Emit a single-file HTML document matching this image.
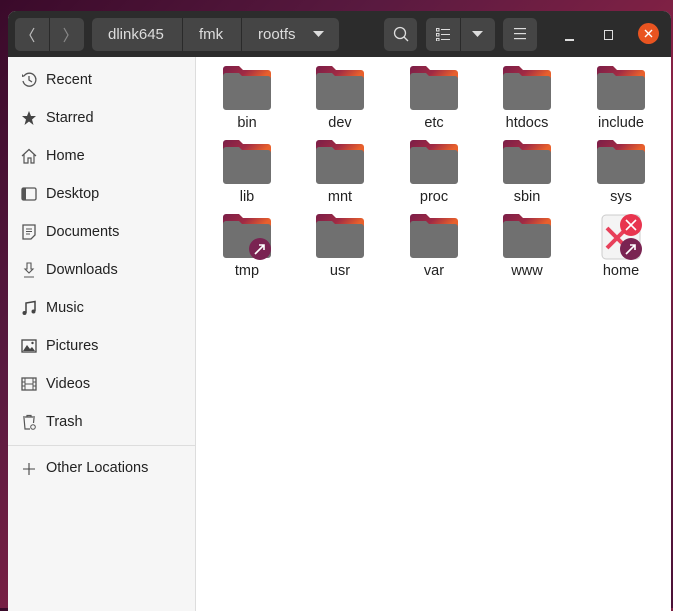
<!DOCTYPE html>
<html><head><style>
*{margin:0;padding:0;box-sizing:border-box}
body{width:673px;height:608px;overflow:hidden;background:linear-gradient(135deg,#3a0a2a 0%,#5a1a40 30%,#8a2346 60%,#4a1238 100%);font-family:"Liberation Sans","DejaVu Sans",sans-serif;position:relative}
.win{position:absolute;left:8px;top:11px;width:663px;height:600px;background:#fff;border-radius:8px 8px 0 0;overflow:hidden}
.hb{position:absolute;left:0;top:0;width:663px;height:46px;background:#2c2c2c}
.btn{position:absolute;top:7px;height:33px;background:#454545;border-radius:5px;color:#ddd;font-size:15px}
.btn span{position:absolute;top:8px}
.sep{position:absolute;top:0;width:1px;height:33px;background:#2a2a2a}
.side{position:absolute;left:0;top:46px;width:188px;height:560px;background:#f6f6f6;border-right:1px solid #ddd}
.it{position:absolute;left:38px;font-size:14.5px;color:#222}
.ic{position:absolute;left:13px;width:16px;height:16px}
.f{position:absolute;width:94px;text-align:center;font-size:14.5px;color:#222}
.f svg{display:block;margin:0 auto 3px}
</style></head><body>
<div class="win">
<div class="hb">
 <div class="btn" style="left:7px;width:69px"><div class="sep" style="left:34px"></div>
  <svg style="position:absolute;left:12px;top:9px" width="10" height="16"><path d="M7 1 L3 8 L7 15" stroke="#bbb" fill="none" stroke-width="1.2"/></svg>
  <svg style="position:absolute;left:46px;top:9px" width="10" height="16"><path d="M3 1 L7 8 L3 15" stroke="#888" fill="none" stroke-width="1.2"/></svg></div>
 <div class="btn" style="left:84px;width:247px"><div class="sep" style="left:90px"></div><div class="sep" style="left:149px"></div>
  <span style="left:16px">dlink645</span><span style="left:107px">fmk</span><span style="left:166px">rootfs</span>
  <svg style="position:absolute;left:221px;top:13px" width="12" height="8"><path d="M0 0H11L5.5 6Z" fill="#ddd"/></svg></div>
 <div class="btn" style="left:376px;width:33px"><svg style="position:absolute;left:9px;top:8px" width="16" height="17"><circle cx="7" cy="7" r="5.5" stroke="#ddd" fill="none" stroke-width="1.3"/><path d="M11 11L15 15" stroke="#ddd" stroke-width="1.3"/></svg></div>
 <div class="btn" style="left:418px;width:69px"><div class="sep" style="left:34px"></div>
  <svg style="position:absolute;left:10px;top:10px" width="14" height="13" fill="#ddd"><rect x="0.5" y="0.5" width="2.5" height="2.5" fill="none" stroke="#ddd"/><rect x="0.5" y="5.5" width="2.5" height="2.5" fill="none" stroke="#ddd"/><rect x="0.5" y="10.5" width="2.5" height="2.5" fill="none" stroke="#ddd"/><rect x="5" y="1" width="9" height="1"/><rect x="5" y="6" width="9" height="1"/><rect x="5" y="11" width="9" height="1"/></svg>
  <svg style="position:absolute;left:46px;top:13px" width="12" height="8"><path d="M0 0H11L5.5 6Z" fill="#ddd"/></svg></div>
 <div class="btn" style="left:495px;width:34px"><svg style="position:absolute;left:11px;top:10px" width="13" height="12" fill="#ddd"><rect y="0" width="12" height="1.2"/><rect y="5" width="12" height="1.2"/><rect y="10" width="12" height="1.2"/></svg></div>
 <div style="position:absolute;left:557px;top:28px;width:9px;height:1.5px;background:#ddd"></div>
 <div style="position:absolute;left:596px;top:19px;width:9px;height:10px;border:1.4px solid #ddd"></div>
 <div style="position:absolute;left:630px;top:12px;width:21px;height:21px;border-radius:50%;background:#e95420"><svg width="21" height="21"><path d="M7 7L14 14M14 7L7 14" stroke="#fff" stroke-width="1.4"/></svg></div>
</div>
<div class="side">
 <svg class="ic" style="top:15px" viewBox="0 0 16 16"><path d="M3 4A6.5 6.5 0 1 1 2 9" fill="none" stroke="#555" stroke-width="1.3"/><path d="M1 2L3.5 4.5L1 5" fill="#555"/><path d="M8 4V8L11 10" fill="none" stroke="#555" stroke-width="1.3"/></svg><div class="it" style="top:15px">Recent</div>
 <svg class="ic" style="top:53px" viewBox="0 0 16 16"><path d="M8 1L10 6H15L11 9.5L12.5 15L8 11.5L3.5 15L5 9.5L1 6H6Z" fill="#444"/></svg><div class="it" style="top:53px">Starred</div>
 <svg class="ic" style="top:91px" viewBox="0 0 16 16"><path d="M1 8L8 1.5L15 8M3 6.5V15H7V10H10V15H13V6.5" fill="none" stroke="#555" stroke-width="1.2"/></svg><div class="it" style="top:91px">Home</div>
 <svg class="ic" style="top:129px" viewBox="0 0 16 16"><rect x="1" y="2" width="14" height="12" rx="1.5" fill="none" stroke="#555" stroke-width="1.3"/><rect x="1" y="2" width="4" height="12" fill="#555"/></svg><div class="it" style="top:129px">Desktop</div>
 <svg class="ic" style="top:167px" viewBox="0 0 16 16"><path d="M2 1H14V11L10 15H2Z" fill="none" stroke="#555" stroke-width="1.3"/><path d="M5 5H11M5 7.5H11M5 10H9" stroke="#555"/></svg><div class="it" style="top:167px">Documents</div>
 <svg class="ic" style="top:205px" viewBox="0 0 16 16"><path d="M6 1H10V7H12L8 11L4 7H6Z M3 15H13" fill="none" stroke="#555" stroke-width="1.1"/></svg><div class="it" style="top:205px">Downloads</div>
 <svg class="ic" style="top:243px" viewBox="0 0 16 16"><path d="M5 13V3L14 1.5V11" fill="none" stroke="#444" stroke-width="1.5"/><circle cx="3.5" cy="13" r="2" fill="#444"/><circle cx="12.5" cy="11.5" r="2" fill="#444"/></svg><div class="it" style="top:243px">Music</div>
 <svg class="ic" style="top:281px" viewBox="0 0 16 16"><rect x="1" y="2" width="14" height="12" fill="none" stroke="#444" stroke-width="1.3"/><path d="M2 13L6 7L9 11L11 9L14 13Z" fill="#444"/><circle cx="11.5" cy="5" r="1.2" fill="#444"/></svg><div class="it" style="top:281px">Pictures</div>
 <svg class="ic" style="top:319px" viewBox="0 0 16 16"><rect x="1" y="2" width="14" height="12" fill="none" stroke="#555" stroke-width="1.3"/><path d="M4 2V14M12 2V14M1 6H4M1 10H4M12 6H15M12 10H15M4 8H12" stroke="#555"/></svg><div class="it" style="top:319px">Videos</div>
 <svg class="ic" style="top:357px" viewBox="0 0 16 16"><path d="M2 3H14M6 3V1.5H10V3M3 4L4 15H9M13 4L12.5 9" fill="none" stroke="#555" stroke-width="1.2"/><circle cx="12" cy="13" r="2.3" fill="none" stroke="#555"/></svg><div class="it" style="top:357px">Trash</div>
 <div style="position:absolute;left:0;top:388px;width:187px;height:1px;background:#ddd"></div>
 <svg class="ic" style="top:404px" viewBox="0 0 16 16"><path d="M8 2V14M2 8H14" stroke="#444" stroke-width="1.1"/></svg><div class="it" style="top:403px">Other Locations</div>
</div>
</div>
<svg width="0" height="0" style="position:absolute"><defs>
<linearGradient id="g" x1="0" x2="1" y1="0" y2="0.3"><stop offset="0" stop-color="#7a1e48"/><stop offset="0.55" stop-color="#a02a44"/><stop offset="1" stop-color="#e8602c"/></linearGradient>
<symbol id="fd" viewBox="0 0 48 46"><path d="M3 0H16L20 4H45A3 3 0 0 1 48 7V14H0V3A3 3 0 0 1 3 0Z" fill="url(#g)"/><path d="M0 10A3 3 0 0 1 3 7H16L19 10H45A3 3 0 0 1 48 13V41A3 3 0 0 1 45 44H3A3 3 0 0 1 0 41Z" fill="#707070"/></symbol>
</defs></svg>
<div id="grid"></div>
<script>
var names=[["bin","dev","etc","htdocs","include"],["lib","mnt","proc","sbin","sys"],["tmp","usr","var","www","home"]];
var xs=[200,293,387,480,574],h="";
for(var r=0;r<3;r++)for(var c=0;c<5;c++){var n=names[r][c],y=66+r*74;
 if(n=="home"){h+='<div class="f" style="left:'+xs[c]+'px;top:'+y+'px"><svg width="48" height="46" viewBox="0 0 48 46"><rect x="5" y="1" width="38" height="44" rx="4" fill="#f4f4f4" stroke="#ccc"/><path d="M10 14L30 34M30 14L10 34" stroke="#e8405a" stroke-width="4"/><circle cx="34" cy="11" r="11" fill="#e8344e"/><path d="M29 6L39 16M39 6L29 16" stroke="#fff" stroke-width="1.6"/><circle cx="34" cy="35" r="11" fill="#7a2452"/><path d="M29 40L38 31M33 31H38V36" stroke="#fff" stroke-width="1.6" fill="none"/></svg>'+n+'</div>';}
 else{h+='<div class="f" style="left:'+xs[c]+'px;top:'+y+'px"><svg width="48" height="46"><use href="#fd"/>'+(n=="tmp"?'<circle cx="37" cy="35" r="11" fill="#7a2452"/><path d="M32 40L41 31M36 31H41V36" stroke="#fff" stroke-width="1.6" fill="none"/>':'')+'</svg>'+n+'</div>';}
}
document.getElementById("grid").innerHTML=h;
</script>
</body></html>
